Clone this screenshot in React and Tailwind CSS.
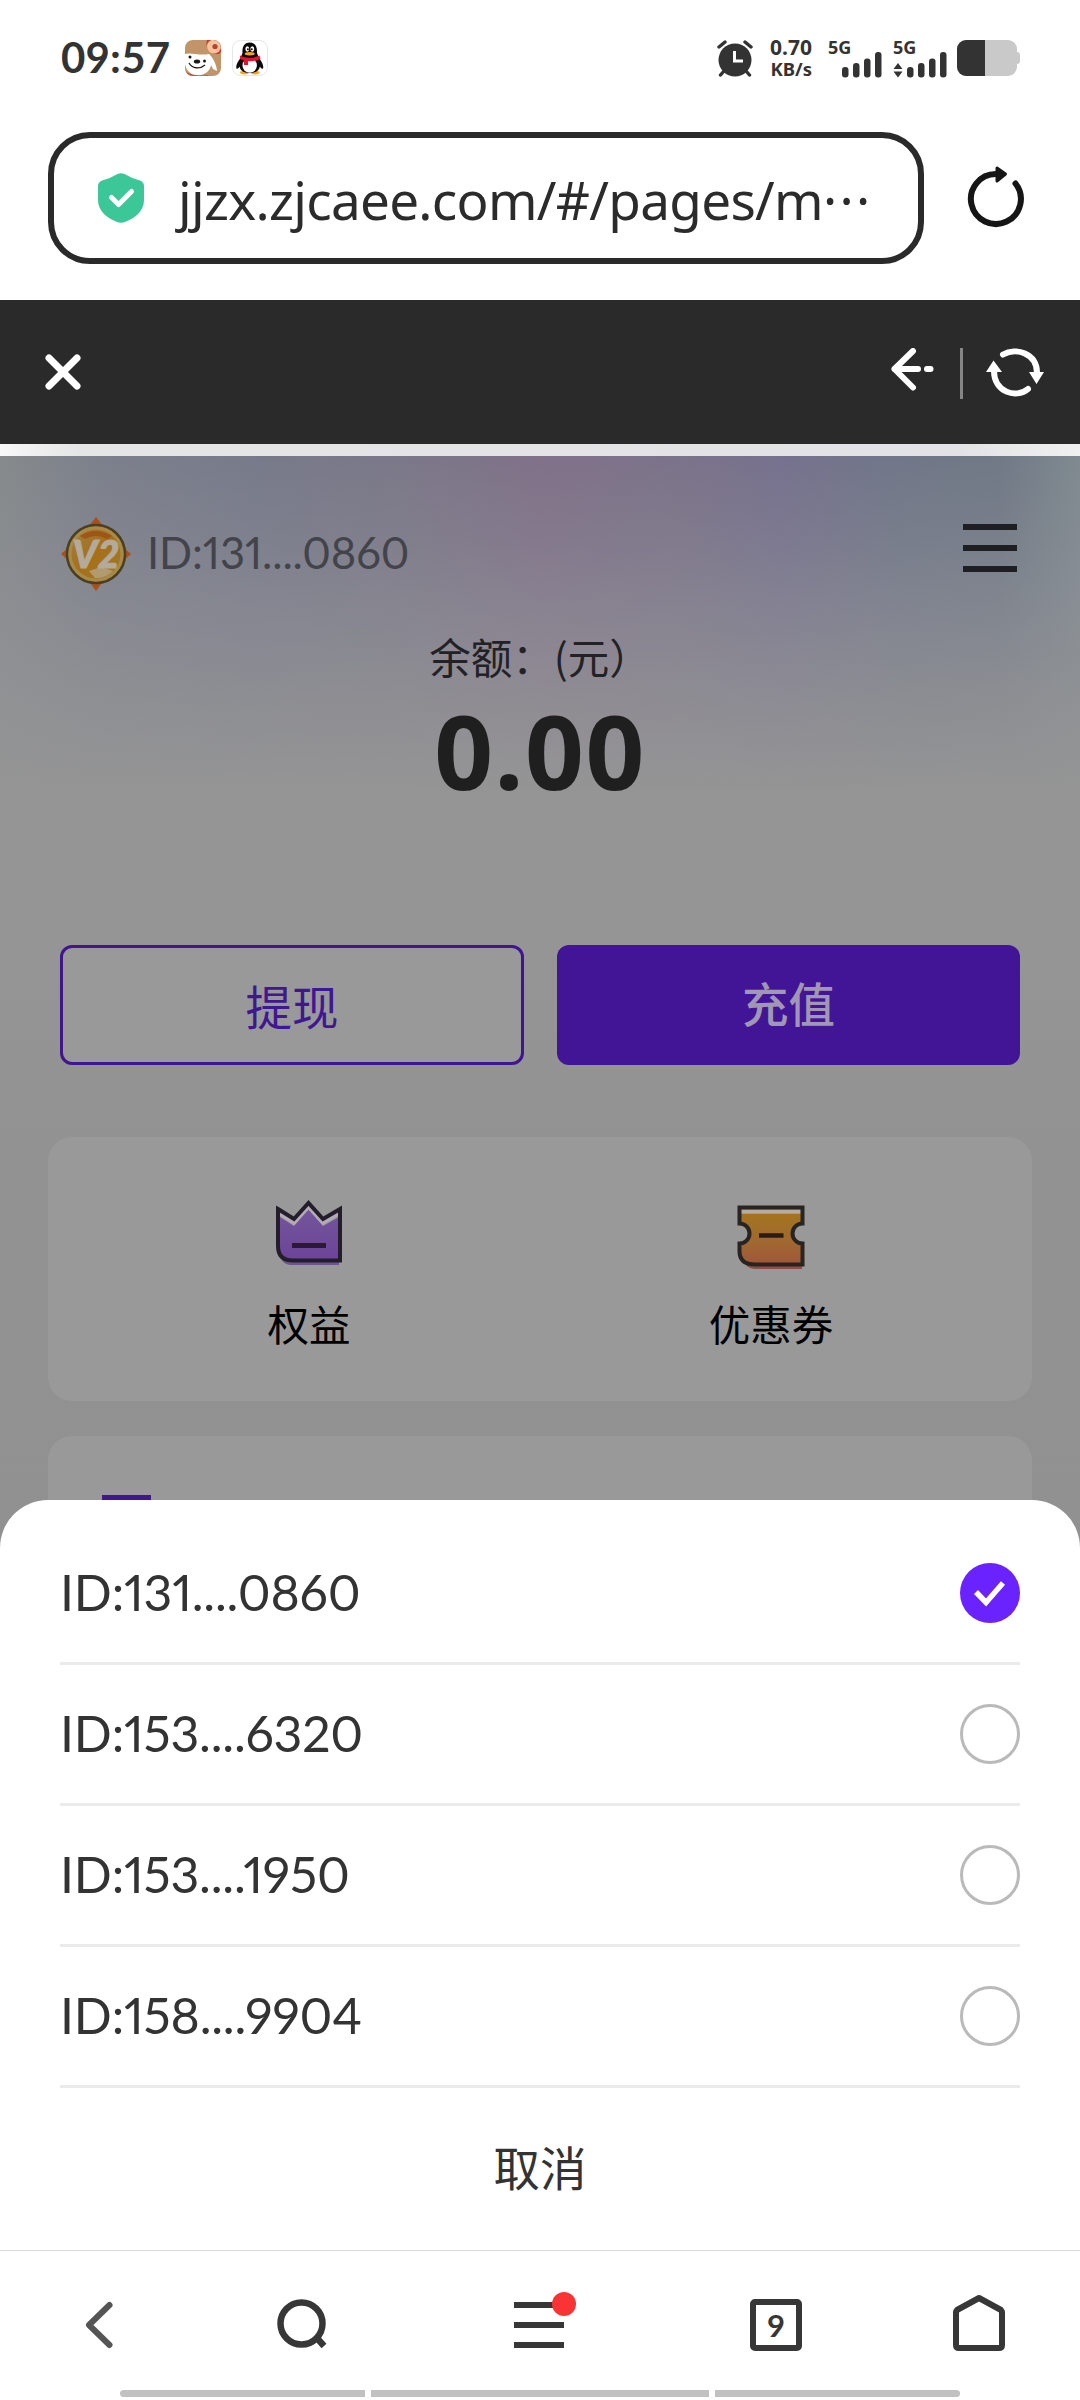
import React from "react";

const CJK = "font-['Noto_Sans_CJK_SC',sans-serif]";

const ACCOUNTS = [
  { id: "ID:131....0860", selected: true },
  { id: "ID:153....6320", selected: false },
  { id: "ID:153....1950", selected: false },
  { id: "ID:158....9904", selected: false },
];

function DogIcon() {
  return (
    <svg width="36" height="36" viewBox="0 0 36 36" className="block">
      <defs>
        <clipPath id="dogClip"><rect width="36" height="36" rx="8" /></clipPath>
      </defs>
      <g clipPath="url(#dogClip)">
        <rect width="36" height="36" fill="#c1946a" />
        <path d="M0 14C6 12 14 16 24 14C28 17 32 26 32 31L28 29L26 25C25 32 18 36 12 35C5 35 1 30 0 24Z" fill="#fff" />
        <path d="M22 0C20 8 24 15 34 14L36 12V0Z" fill="#cf3a2c" />
        <circle cx="29" cy="6.5" r="7" fill="#f6c49c" />
        <circle cx="30" cy="6.5" r="2.6" fill="#b4432f" />
        <ellipse cx="12" cy="21.5" rx="3.2" ry="2" fill="#1f1a18" />
        <circle cx="5" cy="17" r="1.5" fill="#1f1a18" />
        <circle cx="19.5" cy="21" r="1.5" fill="#1f1a18" />
        <path d="M4 23C7 28 14 30 20 25" fill="none" stroke="#1f1a18" strokeWidth="1.3" />
        <path d="M0 30C4 36 14 36 24 35L22 36H0Z" fill="#c9502f" />
      </g>
    </svg>
  );
}

function PenguinIcon() {
  return (
    <svg width="36" height="36" viewBox="0 0 36 36" className="block">
      <rect x=".5" y=".5" width="35" height="35" rx="8" fill="#fff" stroke="#e6e6e6" />
      <ellipse cx="12.500" cy="32.600" rx="4.600" ry="1.800" fill="#f5a51d" />
      <ellipse cx="23" cy="32.600" rx="4.600" ry="1.800" fill="#f5a51d" />
      <path d="M10.500 13C10 6 13 2.500 17.700 2.500S25.500 6 25 13L27 18C30 22 32 26 31 28.500C30 29.500 28.500 27.500 28 26.500C27 31.500 22 33 17.700 33S8.500 31.500 7.500 26.500C7 27.500 5.500 29.500 4.500 28.500C3.500 26 5.500 22 8.500 18Z" fill="#0a0a0a" />
      <ellipse cx="17.700" cy="25.500" rx="7.200" ry="7.300" fill="#fff" />
      <ellipse cx="15.300" cy="9" rx="1.900" ry="2.700" fill="#fff" />
      <ellipse cx="20.300" cy="9" rx="1.900" ry="2.700" fill="#fff" />
      <circle cx="15.900" cy="9.300" r="1" fill="#0a0a0a" />
      <circle cx="19.800" cy="9.300" r="1" fill="#0a0a0a" />
      <ellipse cx="17.700" cy="13.700" rx="5" ry="1.700" fill="#f5a51d" />
      <path d="M8 15.500C13 18.500 22 18.500 27.500 15.500L28.500 19C23 21.500 19 21.500 16 21V25H12V20.500L8 19Z" fill="#e3132c" />
    </svg>
  );
}

function SignalBars() {
  return (
    <svg width="40" height="26" viewBox="0 0 40 26" className="block">
      <g fill="#333">
        <rect x="0" y="15" width="6.500" height="10.500" rx="3" />
        <rect x="11" y="11" width="6.500" height="14.500" rx="3" />
        <rect x="22" y="6.500" width="6.500" height="19" rx="3" />
        <rect x="33" y="0" width="6.500" height="25.500" rx="3" />
      </g>
    </svg>
  );
}

function StatusBar() {
  return (
    <div className="flex h-[132px] shrink-0 items-start pl-[61px] pr-[60px] pt-[40px] text-[#333]">
      <div className="mt-[-1px] w-[124px] whitespace-nowrap font-['Lato',sans-serif] text-[42px] font-bold leading-[36px] tracking-[0.2px]">09:57</div>
      <DogIcon />
      <div className="w-[11px]" />
      <PenguinIcon />
      <div className="flex-1" />
      <svg width="36" height="37" viewBox="0 0 36 37" className="block">
        <circle cx="18" cy="20" r="16.500" fill="#333" />
        <path d="M2 7L8 2M34 7L28 2" stroke="#333" strokeWidth="3.400" strokeLinecap="round" />
        <path d="M7 31L3.500 35M29 31L32.500 35" stroke="#333" strokeWidth="3.400" strokeLinecap="round" />
        <path d="M17.500 11V21H26" fill="none" stroke="#fff" strokeWidth="3" />
      </svg>
      <div className="ml-[13px] mt-[-4px] flex w-[46px] flex-col items-end whitespace-nowrap font-['Noto_Sans',sans-serif] font-bold">
        <span className="h-[22px] text-[21px] leading-[22px]">0.70</span>
        <span className="h-[22px] text-[18.500px] leading-[22px]">KB/s</span>
      </div>
      <div className="ml-[16px] flex w-[54px] flex-col">
        <span className="h-[12px] font-['Noto_Sans',sans-serif] text-[18px] font-bold leading-[15px]">5G</span>
        <div className="flex justify-end"><SignalBars /></div>
      </div>
      <div className="ml-[11px] flex w-[54px] flex-col">
        <span className="h-[12px] font-['Noto_Sans',sans-serif] text-[18px] font-bold leading-[15px]">5G</span>
        <div className="flex items-end justify-between">
          <svg width="10" height="15" viewBox="0 0 10 15" className="block">
            <path d="M5 0L9.500 6H.5ZM5 14.500L9.500 8.500H.5Z" fill="#333" />
          </svg>
          <SignalBars />
        </div>
      </div>
      <div className="ml-[10px] flex items-center">
        <div className="flex h-[36px] w-[60px] overflow-hidden rounded-[9px] bg-[#c9c9c9]">
          <div className="w-[28px] bg-[#333]" />
        </div>
        <div className="h-[12px] w-[3px] rounded-r-sm bg-[#c9c9c9]" />
      </div>
    </div>
  );
}

function AddressBar() {
  return (
    <div className="flex h-[168px] shrink-0 items-start pl-[48px]">
      <div className="flex h-[132px] w-[876px] items-center rounded-[42px] border-[6px] border-[#2a2a2a] pl-[44px]">
        <svg width="46" height="50" viewBox="0 0 46 50" className="block">
          <path d="M19.500 1Q23 -.6 26.500 1Q34 5.600 42 7.500Q46 9 46 13V27C46 38 37 45 27 49Q23 50.600 19 49C9 45 0 38 0 27V13Q0 9 4 7.500Q12 5.600 19.500 1Z" fill="#3bc797" />
          <path d="M13.500 24.500L20.500 31.500L33.500 18.500" fill="none" stroke="#fff" strokeWidth="5" strokeLinecap="round" strokeLinejoin="round" />
        </svg>
        <div className="ml-[34px] mt-[3px] whitespace-nowrap font-['Noto_Sans',sans-serif] text-[53px] leading-[72px] tracking-[-0.7px] text-[#2b2b2b]">jjzx.zjcaee.com/#/pages/m<span className="tracking-[2.300px]">···</span></div>
      </div>
      <svg width="64" height="68" viewBox="0 0 64 68" className="ml-[40px] mt-[30px] block">
        <path d="M32 12A25 25 0 1 0 51.500 21.500" fill="none" stroke="#161616" strokeWidth="6" strokeLinecap="round" />
        <path d="M33 6L41.500 12L33 19Z" fill="#161616" stroke="#161616" strokeWidth="3" strokeLinejoin="round" />
      </svg>
    </div>
  );
}

function DarkToolbar() {
  return (
    <div className="flex h-[144px] shrink-0 items-start bg-[#2a2a2a] pl-[45px] pr-[36px] pt-[48px]">
      <svg width="36" height="36" viewBox="0 0 36 36" className="mt-[6px] block">
        <path d="M4 4L32 32M32 4L4 32" stroke="#fff" strokeWidth="7" strokeLinecap="round" />
      </svg>
      <div className="flex-1" />
      <svg width="43" height="43" viewBox="0 0 43 43" className="block">
        <path d="M22 3L3.500 21L22 39.500M3.500 21H27M36 21H39.500" fill="none" stroke="#fff" strokeWidth="6" strokeLinecap="round" strokeLinejoin="round" />
      </svg>
      <div className="ml-[26px] h-[51px] w-[3px] bg-[#858585]" />
      <svg width="58" height="50" viewBox="0 0 58 50" className="ml-[23px] block">
        <path d="M17 6.500C30 -1 51 5 51 25M42 41C30 51 8 44 8 23" fill="none" stroke="#fff" strokeWidth="6" strokeLinecap="round" />
        <path d="M43 24H58L50.500 36ZM0 24L7.500 12.500L16 24Z" fill="#fff" />
      </svg>
    </div>
  );
}

function Badge() {
  return (
    <svg width="70" height="74" viewBox="0 0 70 74" className="block">
      <defs>
        <linearGradient id="gold" x1="0" y1="0" x2="1" y2="1">
          <stop offset="0" stopColor="#a08044" />
          <stop offset=".5" stopColor="#a67018" />
          <stop offset="1" stopColor="#a07a35" />
        </linearGradient>
      </defs>
      <path d="M35 0L43 10H27ZM35 74L43 63H27ZM0 37L9 29V45ZM70 37L61 29V45Z" fill="#a8501c" />
      <circle cx="35" cy="37" r="29" fill="url(#gold)" stroke="#493f24" strokeWidth="2.500" />
      <circle cx="35" cy="37" r="26" fill="none" stroke="#a88a48" strokeWidth="3" />
      <path d="M19 19Q34 9 51 19L46 22Q35 16 24 22Z" fill="#9c4e14" opacity=".8" />
      <path d="M28 54L40 50L52 54Q44 62 34 61Z" fill="#b09a70" />
      <text x="35" y="51" textAnchor="middle" fontFamily="Lato, sans-serif" fontWeight="900" fontStyle="italic" fontSize="38" fill="#b3aa9c" stroke="#b3aa9c" strokeWidth="1" textLength="47" lengthAdjust="spacingAndGlyphs">V2</text>
    </svg>
  );
}

function CrownIcon() {
  return (
    <svg width="68" height="68" viewBox="0 0 68 68" className="block">
      <defs>
        <linearGradient id="crown" x1="0" y1="0" x2="0" y2="1">
          <stop offset="0" stopColor="#73569a" />
          <stop offset="1" stopColor="#6b4299" />
        </linearGradient>
      </defs>
      <path d="M5 18L19 27L33.500 10L48 27L64 18V66H16Q6 65 5 54Z" fill="url(#crown)" />
      <path d="M5 58Q8 65 16 66H64V62H14Z" fill="#6d5593" />
      <path d="M5 15L19 24L33.500 8L48 24L63 15" fill="none" stroke="#b3acb8" strokeWidth="3.500" />
      <path d="M3 10L19 20L33.500 4L48 20L65 10V61.500H18Q3 61.500 3 47Z" fill="none" stroke="#241e2b" strokeWidth="4" />
      <path d="M17 46.500H51" stroke="#2b1937" strokeWidth="5" />
    </svg>
  );
}

function TicketIcon() {
  return (
    <svg width="68" height="66" viewBox="0 0 68 66" className="block">
      <defs>
        <linearGradient id="ticket" x1="0" y1="0" x2="0" y2="1">
          <stop offset="0" stopColor="#a3741f" />
          <stop offset=".5" stopColor="#a06a2f" />
          <stop offset="1" stopColor="#a1563b" />
        </linearGradient>
      </defs>
      <path d="M6 54Q8 63 17 64H65V56H8Z" fill="#8c5047" />
      <path d="M3 9H65V18.500A10 10 0 0 0 65 38.500V60H18Q3 60 3 46V38.500A10 10 0 0 0 3 18.500Z" fill="url(#ticket)" />
      <path d="M4 6.500H64" stroke="#b3aca0" strokeWidth="3.500" />
      <path d="M2.500 2.500H65.500V18.500A10 10 0 0 0 65.500 38.500V59.500H18Q2.500 59.500 2.500 46V38.500A10 10 0 0 0 2.500 18.500Z" fill="none" stroke="#272422" strokeWidth="4" />
      <path d="M22 30.500H46.500" stroke="#2a1a18" strokeWidth="4.500" />
    </svg>
  );
}

function WalletPage() {
  return (
    <div className="flex h-full flex-col bg-[linear-gradient(180deg,#92929800_0,#92929840_84px,#92929880_150px,#949496c0_240px,#959595_340px,#959595_500px,#929292_700px,#8f8f8f_100%),linear-gradient(90deg,#868a8c_0,#7c808b_100px,#777a8a_260px,#7b7888_400px,#807189_540px,#7b7389_680px,#76718e_780px,#707788_900px,#707986_1000px,#7f8a90_1080px)]">
      <div className="flex h-[180px] items-start pl-[61px] pr-[63px] pt-[61px]">
        <Badge />
        <div className="ml-[16px] mt-[5px] whitespace-nowrap font-['Lato',sans-serif] text-[43.500px] leading-[60px] text-[#43444b] tracking-[-0.1px] proportional-nums">ID:131....0860</div>
        <div className="flex-1" />
        <div className="mt-[7px] flex w-[54px] flex-col gap-[15px]">
          <div className="h-[6px] bg-[#1d1f22]" />
          <div className="h-[6px] bg-[#1d1f22]" />
          <div className="h-[6px] bg-[#1d1f22]" />
        </div>
      </div>
      <div className={`mt-[-4px] h-[61px] whitespace-nowrap text-center text-[41.500px] leading-[48px] text-[#222226] ${CJK}`}>余额：(元）</div>
      <div className="h-[252px] text-center font-['Noto_Sans',sans-serif] text-[103px] font-bold leading-[114px] tracking-[1.500px] text-[#1f1f1f]">0.00</div>
      <div className="flex h-[192px] shrink-0 items-start gap-[33px] px-[60px]">
        <div className={`flex h-[120px] w-[464px] items-center justify-center rounded-[12px] border-[3px] border-[#3f1592] bg-[#999] text-[46.500px] leading-[60px] text-[#3f1794] ${CJK}`}>提现</div>
        <div className={`flex h-[120px] w-[463px] items-center justify-center rounded-[12px] bg-[#411596] pb-[6px] text-[46.500px] font-medium leading-[60px] text-[#a196b3] ${CJK}`}>充值</div>
      </div>
      <div className="mx-[48px] flex h-[264px] shrink-0 rounded-[24px] bg-[#999] px-[30px] pt-[62px]">
        <div className="flex flex-1 flex-col items-center">
          <CrownIcon />
          <span className={`mt-[26px] text-[41.500px] leading-[60px] text-black ${CJK}`}>权益</span>
        </div>
        <div className="flex flex-1 flex-col items-center pt-[6px]">
          <TicketIcon />
          <span className={`mt-[22px] text-[41.500px] leading-[60px] text-black ${CJK}`}>优惠券</span>
        </div>
      </div>
      <div className="mx-[48px] mt-[35px] h-[264px] shrink-0 rounded-[24px] bg-[#999] pl-[54px] pt-[59px]">
        <div className="h-[48px] w-[49px] border-[5px] border-[#3f1792]" />
      </div>
    </div>
  );
}

function AccountSheet() {
  return (
    <div className="absolute inset-x-0 bottom-0 flex h-[750px] flex-col rounded-t-[48px] bg-white px-[60px] pt-[24px]">
      {ACCOUNTS.map((a) => (
        <div key={a.id} className="flex h-[141px] items-center justify-between border-b-[3px] border-[#ebebeb]">
          <span className="mt-[-2px] whitespace-nowrap font-['Lato',sans-serif] text-[50px] leading-[60px] tracking-[-0.2px] text-[#333] proportional-nums">{a.id}</span>
          {a.selected ? (
            <svg width="60" height="60" viewBox="0 0 60 60" className="block">
              <circle cx="30" cy="30" r="30" fill="#6a22ff" />
              <path d="M16 29L26 39.500L43 20" fill="none" stroke="#fff" strokeWidth="5.500" />
            </svg>
          ) : (
            <div className="h-[60px] w-[60px] rounded-full border-[3px] border-[#bababa]" />
          )}
        </div>
      ))}
      <div className={`flex flex-1 items-center justify-center pb-[6px] text-[46.500px] leading-[60px] text-[#333] ${CJK}`}>取消</div>
    </div>
  );
}

function BottomNav() {
  return (
    <div className="flex h-[150px] shrink-0 flex-col border-t border-[#dadada] bg-white">
      <div className="flex h-[139px] items-start pl-[84px] pt-[43px]">
        <svg width="30" height="56" viewBox="0 0 30 56" className="block">
          <path d="M25.500 11L5 31L25.500 51" fill="none" stroke="#555" strokeWidth="6" strokeLinecap="round" strokeLinejoin="round" />
        </svg>
        <svg width="52" height="56" viewBox="0 0 52 56" className="ml-[162px] block">
          <circle cx="25.500" cy="29.500" r="21" fill="none" stroke="#373737" strokeWidth="6.500" />
          <path d="M40 43L48 52" stroke="#373737" strokeWidth="6.500" />
        </svg>
        <svg width="64" height="56" viewBox="0 0 64 56" className="ml-[186px] block overflow-visible">
          <path d="M0 11H50M0 31H50M0 51H50" stroke="#373737" strokeWidth="6" />
          <circle cx="50" cy="10" r="12" fill="#fa3434" />
        </svg>
        <div className="ml-[172px] mt-[5px] flex h-[52px] w-[52px] items-center justify-center rounded-[5px] border-[6px] border-[#373737] font-['Lato',sans-serif] text-[31px] font-bold leading-none text-[#373737]">9</div>
        <svg width="54" height="58" viewBox="0 0 54 58" className="ml-[150px] block">
          <path d="M4 18Q4 17 5 16L27 4L49 16Q50 17 50 18V51Q50 54 47 54H7Q4 54 4 51Z" fill="none" stroke="#373737" strokeWidth="6" strokeLinejoin="round" />
        </svg>
      </div>
      <div className="flex h-[7px] gap-[6px] px-[120px]">
        <div className="w-[245px] rounded-l-full bg-[#c1c1c1]" />
        <div className="w-[338px] bg-[#c1c1c1]" />
        <div className="w-[245px] rounded-r-full bg-[#c1c1c1]" />
      </div>
    </div>
  );
}

export default function App() {
  return (
    <div className="flex h-[2400px] w-[1080px] flex-col overflow-hidden bg-white">
      <StatusBar />
      <AddressBar />
      <DarkToolbar />
      <div className="h-[12px] shrink-0 bg-[linear-gradient(90deg,#f8f8f8,#e5e5e6_80px,#e3e3e5_960px,#f0f0f0)]" />
      <div className="relative h-[1794px] shrink-0 overflow-hidden">
        <WalletPage />
        <AccountSheet />
      </div>
      <BottomNav />
    </div>
  );
}
